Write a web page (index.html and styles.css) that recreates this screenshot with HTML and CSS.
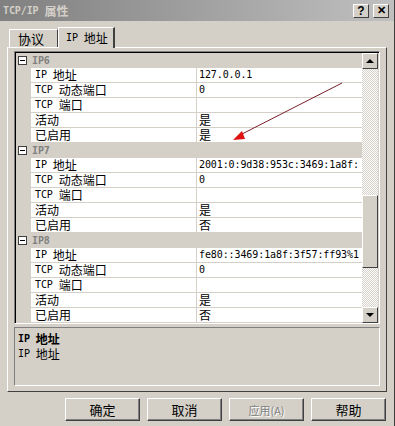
FILE: index.html
```html
<!DOCTYPE html>
<html lang="zh-CN">
<head>
    <meta charset="UTF-8">
    <title>TCP/IP 属性</title>
    <link rel="stylesheet" href="styles.css">
</head>
<body>
<div class="dialog">

    <div class="titlebar">
        <span class="title"><span class="en sp">TCP/IP</span><span>属性</span></span>
        <span class="caption_buttons">
            <span class="cap_btn">?</span>
            <span class="cap_btn cap_close">&#10005;</span>
        </span>
    </div>

    <div class="tabs">
        <span class="tab">协议</span>
        <span class="tab tab_active"><span class="en sp">IP</span><span>地址</span></span>
    </div>

    <div class="panel">
        <div class="grid_frame">
            <div class="grid">

                <div class="cat_row"><span class="toggle"></span><span class="cat_name en">IP6</span></div>
                <div class="prop_row"><span class="margin"></span><span class="name"><span class="en sp">IP</span><span>地址</span></span><span class="value en">127.0.0.1</span></div>
                <div class="prop_row"><span class="margin"></span><span class="name"><span class="en sp">TCP</span><span>动态端口</span></span><span class="value en">0</span></div>
                <div class="prop_row"><span class="margin"></span><span class="name"><span class="en sp">TCP</span><span>端口</span></span><span class="value"></span></div>
                <div class="prop_row"><span class="margin"></span><span class="name">活动</span><span class="value">是</span></div>
                <div class="prop_row"><span class="margin"></span><span class="name">已启用</span><span class="value">是</span></div>

                <div class="cat_row"><span class="toggle"></span><span class="cat_name en">IP7</span></div>
                <div class="prop_row"><span class="margin"></span><span class="name"><span class="en sp">IP</span><span>地址</span></span><span class="value en">2001:0:9d38:953c:3469:1a8f:</span></div>
                <div class="prop_row"><span class="margin"></span><span class="name"><span class="en sp">TCP</span><span>动态端口</span></span><span class="value en">0</span></div>
                <div class="prop_row"><span class="margin"></span><span class="name"><span class="en sp">TCP</span><span>端口</span></span><span class="value"></span></div>
                <div class="prop_row"><span class="margin"></span><span class="name">活动</span><span class="value">是</span></div>
                <div class="prop_row"><span class="margin"></span><span class="name">已启用</span><span class="value">否</span></div>

                <div class="cat_row"><span class="toggle"></span><span class="cat_name en">IP8</span></div>
                <div class="prop_row"><span class="margin"></span><span class="name"><span class="en sp">IP</span><span>地址</span></span><span class="value en">fe80::3469:1a8f:3f57:ff93%1</span></div>
                <div class="prop_row"><span class="margin"></span><span class="name"><span class="en sp">TCP</span><span>动态端口</span></span><span class="value en">0</span></div>
                <div class="prop_row"><span class="margin"></span><span class="name"><span class="en sp">TCP</span><span>端口</span></span><span class="value"></span></div>
                <div class="prop_row"><span class="margin"></span><span class="name">活动</span><span class="value">是</span></div>
                <div class="prop_row"><span class="margin"></span><span class="name">已启用</span><span class="value">否</span></div>

                <!-- red annotation arrow drawn over the grid -->
                <svg class="arrow" width="130" height="70" viewBox="0 0 130 70">
                    <line x1="110" y1="1" x2="10" y2="52" stroke="#7a1f2a" stroke-width="1"/>
                    <polygon points="1,58 10,49 13,57" fill="#e01010"/>
                </svg>
            </div>

            <div class="scrollbar">
                <div class="sb_btn"><span class="tri_up"></span></div>
                <div class="sb_track sb_track_top"></div>
                <div class="sb_thumb"></div>
                <div class="sb_track sb_track_bottom"></div>
                <div class="sb_btn"><span class="tri_down"></span></div>
            </div>
        </div>

        <div class="desc">
            <div class="desc_line desc_title"><span class="en sp">IP</span><span>地址</span></div>
            <div class="desc_line"><span class="en sp">IP</span><span>地址</span></div>
        </div>
    </div>

    <div class="buttons">
        <span class="btn">确定</span>
        <span class="btn">取消</span>
        <span class="btn btn_disabled">应用(A)</span>
        <span class="btn">帮助</span>
    </div>

</div>
</body>
</html>
```

FILE: styles.css
```css
body {
    margin: 0;
    background: #d4d0c8;
    font-family: "Noto Sans CJK SC", sans-serif;
    font-size: 12px;
    line-height: 14px;
    color: #000000;
}

/* latin text in the half-width cell size of the dialog font */
.en {
    font-family: "DejaVu Sans Mono", monospace;
    font-size: 10px;
    letter-spacing: -0.1px;
}

.sp {
    margin-right: 6px;
}

.dialog {
    width: 395px;
    height: 426px;
    background: #d4d0c8;
    border-right: 1px solid #404040;
    box-sizing: border-box;
    overflow: hidden;
}

.titlebar {
    height: 21px;
    display: flex;
    justify-content: space-between;
    align-items: center;
    padding: 0 5px 0 3px;
    background: linear-gradient(to right, #808080, #c0c0c0);
}

.title {
    display: flex;
    align-items: center;
    color: #d4d0c8;
    font-weight: bold;
    font-size: 12px;
}

.caption_buttons {
    display: flex;
    gap: 2px;
}

.cap_btn {
    width: 16px;
    height: 14px;
    box-sizing: border-box;
    display: flex;
    justify-content: center;
    align-items: center;
    background: #d4d0c8;
    border: 1px solid;
    border-color: #ffffff #404040 #404040 #ffffff;
    font-family: "Liberation Sans", sans-serif;
    font-weight: bold;
    font-size: 12px;
    line-height: 1;
}

.cap_close {
    margin-left: 2px;
    font-size: 11px;
}

.tabs {
    display: flex;
    align-items: flex-end;
    height: 26px;
    padding-left: 9px;
}

.tab {
    height: 17px;
    padding: 0 8px;
    display: flex;
    align-items: center;
    border: 1px solid;
    border-color: #ffffff #404040 transparent #ffffff;
    border-bottom: 0;
    font-size: 13px;
    width: 31px;
}

.tab_active {
    height: 20px;
    width: auto;
    padding: 0 5px 0 7px;
    margin-bottom: -1px;
    background: #d4d0c8;
    font-size: 12px;
    border-right: 2px solid #404040;
}

.panel {
    margin: 0 7px 0 7px;
    height: 345px;
    border: 1px solid;
    border-color: #ffffff #404040 #404040 #ffffff;
    box-sizing: border-box;
    padding: 3px 6px 0 6px;
}

.grid_frame {
    display: flex;
    height: 273px;
    border: 1px solid;
    border-color: #808080 #ffffff #ffffff #808080;
    box-shadow: inset 1px 1px 0 #000000;
    box-sizing: border-box;
    padding: 1px 1px 0 1px;
}

.grid {
    position: relative;
    flex: 1;
    min-width: 0;
    display: flex;
    flex-direction: column;
    background: #d4d0c8;
}

.cat_row {
    height: 15px;
    flex: none;
    display: flex;
    align-items: center;
    background: #d4d0c8;
}

.toggle {
    width: 9px;
    height: 9px;
    margin: 0 5px 0 2px;
    border: 1px solid #404040;
    box-sizing: border-box;
    background: #ffffff;
    position: relative;
}

.toggle::after {
    content: "";
    position: absolute;
    left: 1px;
    top: 3px;
    width: 5px;
    height: 1px;
    background: #000000;
}

.cat_name {
    color: #808080;
    font-weight: bold;
}

.prop_row {
    height: 15px;
    flex: none;
    display: flex;
}

.margin {
    width: 15px;
    flex: none;
}

.name {
    width: 161px;
    flex: none;
    display: flex;
    align-items: center;
    padding-left: 4px;
    background: #ffffff;
    border-bottom: 1px solid #d4d0c8;
    border-right: 1px solid #d4d0c8;
    white-space: nowrap;
}

.value {
    flex: 1;
    min-width: 0;
    display: flex;
    align-items: center;
    padding-left: 2px;
    background: #ffffff;
    border-bottom: 1px solid #d4d0c8;
    white-space: nowrap;
}

.arrow {
    position: absolute;
    left: 216px;
    top: 29px;
}

.scrollbar {
    width: 16px;
    flex: none;
    display: flex;
    flex-direction: column;
}

.sb_btn {
    height: 16px;
    flex: none;
    box-sizing: border-box;
    background: #d4d0c8;
    border: 1px solid;
    border-color: #ffffff #404040 #404040 #ffffff;
    display: flex;
    justify-content: center;
    align-items: center;
}

.tri_up {
    border-left: 4px solid transparent;
    border-right: 4px solid transparent;
    border-bottom: 4px solid #000000;
}

.tri_down {
    border-left: 4px solid transparent;
    border-right: 4px solid transparent;
    border-top: 4px solid #000000;
}

.sb_track {
    background-color: #ffffff;
    background-image: repeating-conic-gradient(#d4d0c8 0 25%, #ffffff 0 50%);
    background-size: 2px 2px;
}

.sb_track_top {
    height: 126px;
}

.sb_thumb {
    height: 73px;
    flex: none;
    box-sizing: border-box;
    background: #d4d0c8;
    border: 1px solid;
    border-color: #ffffff #404040 #404040 #ffffff;
}

.sb_track_bottom {
    flex: 1;
}

.desc {
    height: 59px;
    margin-top: 3px;
    border: 1px solid;
    border-color: #808080 #ffffff #ffffff #808080;
    box-sizing: border-box;
    padding: 3px 3px;
}

.desc_line {
    height: 15px;
    display: flex;
    align-items: center;
}

.desc_title {
    font-weight: bold;
}

.buttons {
    display: flex;
    justify-content: flex-end;
    gap: 7px;
    padding: 6px 8px 0 0;
}

.btn {
    width: 75px;
    height: 23px;
    box-sizing: border-box;
    display: flex;
    justify-content: center;
    align-items: center;
    border: 1px solid;
    border-color: #ffffff #404040 #404040 #ffffff;
    box-shadow: inset -1px -1px 0 #808080;
    font-size: 13px;
}

.btn_disabled {
    color: #808080;
    text-shadow: 1px 1px 0 #ffffff;
    font-size: 11px;
}
```
